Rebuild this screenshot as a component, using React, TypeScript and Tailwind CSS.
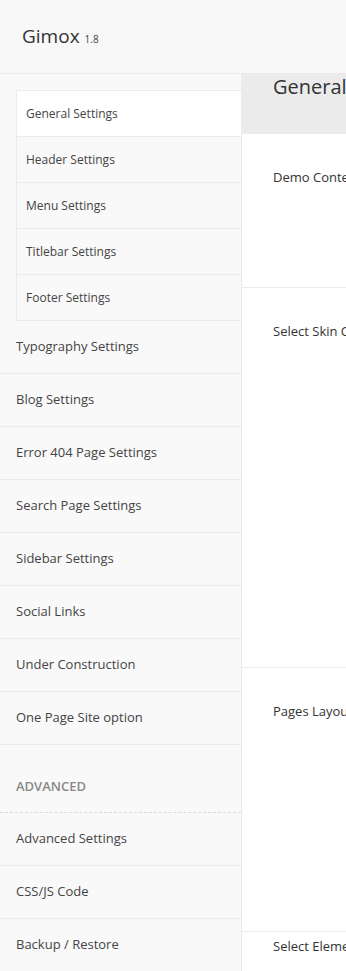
const subItems = ["General Settings", "Header Settings", "Menu Settings", "Titlebar Settings", "Footer Settings"];

const mainItems = [
  "Typography Settings",
  "Blog Settings",
  "Error 404 Page Settings",
  "Search Page Settings",
  "Sidebar Settings",
  "Social Links",
  "Under Construction",
  "One Page Site option",
];

const advancedItems = ["Advanced Settings", "CSS/JS Code", "Backup / Restore"];

function NavItem({ label }: { label: string }) {
  return (
    <div className="flex h-[53px] items-center border-b border-[#ebebeb] pl-4 text-[13px] text-[#444]">
      {label}
    </div>
  );
}

export default function App() {
  return (
    <div className="h-[971px] w-[346px] overflow-hidden bg-white font-['Open_Sans',sans-serif]">
      <header className="flex h-[74px] items-center border-b border-[#ebebeb] bg-[#f8f8f8] pl-[22px]">
        <span className="text-[19px] text-[#333]">Gimox</span>
        <span className="ml-[5px] mt-[5px] text-[10px] text-[#444]">1.8</span>
      </header>

      <div className="flex">
        <nav className="w-[242px] shrink-0 border-r border-[#ebebeb] bg-[#f9f9f9] pt-4">
          <ul className="ml-4 border-t border-l border-[#ebebeb]">
            {subItems.map((item, i) => (
              <li
                key={item}
                className={`flex h-[46px] items-center border-b border-[#ebebeb] pl-[9px] text-[12px] text-[#444] ${
                  i === 0 ? "bg-white text-[#333]" : "bg-[#f9f9f9]"
                }`}
              >
                {item}
              </li>
            ))}
          </ul>
          {mainItems.map((item) => (
            <NavItem key={item} label={item} />
          ))}
          <div className="flex h-[68px] items-end border-b border-dashed border-[#d9d9d9] pb-[16px] pl-4 text-[13px] font-semibold text-[#888]">
            ADVANCED
          </div>
          {advancedItems.map((item) => (
            <NavItem key={item} label={item} />
          ))}
        </nav>

        <main className="flex-1 overflow-hidden">
          <div className="h-[60px] bg-[#ebebeb] pl-[31px] text-[20px] leading-[26px] whitespace-nowrap text-[#333]">
            General Settings
          </div>
          <div className="h-[154px] border-b border-[#ebebeb] pl-[31px] pt-[34px] text-[13px] whitespace-nowrap text-[#333]">
            Demo Content
          </div>
          <div className="h-[380px] border-b border-[#ebebeb] pl-[31px] pt-[34px] text-[13px] whitespace-nowrap text-[#333]">
            Select Skin Color
          </div>
          <div className="h-[264px] border-b border-[#ebebeb] pl-[31px] pt-[34px] text-[13px] whitespace-nowrap text-[#333]">
            Pages Layout
          </div>
          <div className="pl-[31px] pt-[5px] text-[13px] whitespace-nowrap text-[#333]">
            Select Elements
          </div>
        </main>
      </div>
    </div>
  );
}
